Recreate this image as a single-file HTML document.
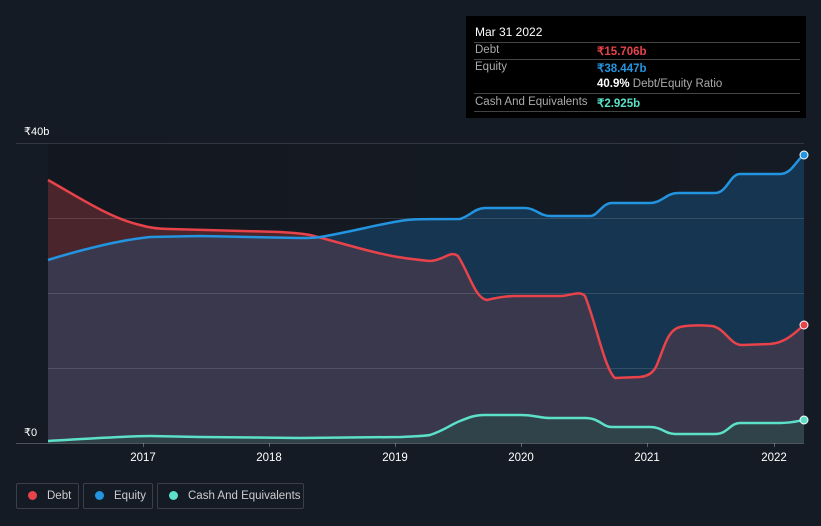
<!DOCTYPE html>
<html><head><style>
html,body{margin:0;width:821px;height:526px;overflow:hidden}
body{background:#151b24;font-family:"Liberation Sans",sans-serif;position:relative}
.tt{position:absolute;left:466px;top:16px;width:340px;height:102px;background:#000;color:#fff;font-size:11.5px}
.tt div{white-space:nowrap}
.r{position:absolute;left:8px;right:6px;border-top:1px solid #444}
.lg{position:absolute;top:483px;height:26px;border:1px solid #3a3f48;border-radius:2px;color:#ccc;font-size:11.5px;line-height:24px;box-sizing:border-box;white-space:nowrap}
.dot{display:inline-block;width:9px;height:9px;border-radius:50%;margin:0 10px 0 11px;vertical-align:-1px}
</style></head><body>
<svg width="821" height="526" style="position:absolute;left:0;top:0">
<defs>
<clipPath id="eq"><path d="M48,260 C80,250 120,240 150,237 L200,236 L300,238 C310,238 315,238 320,237 C350,232 380,224 400,221 C410,219 420,219 460,219 C470,216 475,208 485,208 L525,208 C535,208 540,216 550,216 L590,216 C598,216 602,203 612,203 L650,203 C662,203 666,193 678,193 L715,193 C727,193 730,174 740,174 L780,174 C792,174 796,160 804,155 L804,443 L48,443Z"/></clipPath>
<linearGradient id="bg" x1="0" x2="1"><stop offset="0" stop-color="#131820"/><stop offset="1" stop-color="#151b24"/></linearGradient>
</defs>
<rect x="48" y="143" width="756" height="300" fill="url(#bg)"/>
<path d="M48,260 C80,250 120,240 150,237 L200,236 L300,238 C310,238 315,238 320,237 C350,232 380,224 400,221 C410,219 420,219 460,219 C470,216 475,208 485,208 L525,208 C535,208 540,216 550,216 L590,216 C598,216 602,203 612,203 L650,203 C662,203 666,193 678,193 L715,193 C727,193 730,174 740,174 L780,174 C792,174 796,160 804,155 L804,443 L48,443Z" fill="#163550"/>
<path d="M48,180 C80,198 110,218 140,225 C150,228 160,229 170,229 L280,232 C295,233 300,233 310,235 C330,240 350,246 370,251 C390,256 400,258 430,261 C445,260 450,250 458,256 C470,275 475,298 487,300 C495,298 505,296 515,296 L560,296 C570,296 580,290 585,296 C595,320 605,370 615,378 L640,377 C650,376 655,371 658,362 C665,345 668,330 680,327 C690,325 700,325 712,326 C725,328 730,345 742,345 L770,344 C785,343 795,333 804,325 L804,443 L48,443Z" fill="#4a252c"/>
<g clip-path="url(#eq)"><path d="M48,180 C80,198 110,218 140,225 C150,228 160,229 170,229 L280,232 C295,233 300,233 310,235 C330,240 350,246 370,251 C390,256 400,258 430,261 C445,260 450,250 458,256 C470,275 475,298 487,300 C495,298 505,296 515,296 L560,296 C570,296 580,290 585,296 C595,320 605,370 615,378 L640,377 C650,376 655,371 658,362 C665,345 668,330 680,327 C690,325 700,325 712,326 C725,328 730,345 742,345 L770,344 C785,343 795,333 804,325 L804,443 L48,443Z" fill="#3a384c"/></g>
<g stroke="#fff" stroke-opacity="0.13" stroke-width="1"><line x1="16" y1="143.5" x2="804" y2="143.5"/><line x1="48" y1="218.5" x2="804" y2="218.5"/><line x1="48" y1="293.5" x2="804" y2="293.5"/><line x1="48" y1="368.5" x2="804" y2="368.5"/></g>
<path d="M48,441 C100,438 130,436 150,436 L200,437 L300,438 L400,437 C420,436 425,436 430,435 C445,430 450,425 460,421 C470,417 475,415 485,415 L520,415 C535,415 540,418 550,418 L585,418 C600,418 602,427 612,427 L650,427 C662,427 665,434 675,434 L715,434 C728,434 730,423 740,423 L780,423 C792,423 798,421 804,420 L804,443 L48,443Z" fill="#2a4a4a" fill-opacity="0.6"/>
<path d="M48,180 C80,198 110,218 140,225 C150,228 160,229 170,229 L280,232 C295,233 300,233 310,235 C330,240 350,246 370,251 C390,256 400,258 430,261 C445,260 450,250 458,256 C470,275 475,298 487,300 C495,298 505,296 515,296 L560,296 C570,296 580,290 585,296 C595,320 605,370 615,378 L640,377 C650,376 655,371 658,362 C665,345 668,330 680,327 C690,325 700,325 712,326 C725,328 730,345 742,345 L770,344 C785,343 795,333 804,325" fill="none" stroke="#e8434a" stroke-width="2.5"/>
<path d="M48,260 C80,250 120,240 150,237 L200,236 L300,238 C310,238 315,238 320,237 C350,232 380,224 400,221 C410,219 420,219 460,219 C470,216 475,208 485,208 L525,208 C535,208 540,216 550,216 L590,216 C598,216 602,203 612,203 L650,203 C662,203 666,193 678,193 L715,193 C727,193 730,174 740,174 L780,174 C792,174 796,160 804,155" fill="none" stroke="#2394e0" stroke-width="2.5"/>
<path d="M48,441 C100,438 130,436 150,436 L200,437 L300,438 L400,437 C420,436 425,436 430,435 C445,430 450,425 460,421 C470,417 475,415 485,415 L520,415 C535,415 540,418 550,418 L585,418 C600,418 602,427 612,427 L650,427 C662,427 665,434 675,434 L715,434 C728,434 730,423 740,423 L780,423 C792,423 798,421 804,420" fill="none" stroke="#5ce0c8" stroke-width="2.5"/>
<circle cx="804" cy="155" r="4" fill="#2394e0" stroke="#fff" stroke-width="1"/>
<circle cx="804" cy="325" r="4" fill="#e8434a" stroke="#fff" stroke-width="1"/>
<circle cx="804" cy="420" r="4" fill="#5ce0c8" stroke="#fff" stroke-width="1"/>
<line x1="16" y1="443.5" x2="804" y2="443.5" stroke="#fff" stroke-opacity="0.25"/>
<g stroke="#fff" stroke-opacity="0.3"><line x1="143.5" y1="443" x2="143.5" y2="447"/><line x1="269.5" y1="443" x2="269.5" y2="447"/><line x1="395.5" y1="443" x2="395.5" y2="447"/><line x1="521.5" y1="443" x2="521.5" y2="447"/><line x1="647.5" y1="443" x2="647.5" y2="447"/><line x1="774.5" y1="443" x2="774.5" y2="447"/></g>
<g fill="#fff" font-size="11.5" font-family="Liberation Sans,sans-serif" text-anchor="middle"><text x="143" y="461">2017</text><text x="269" y="461">2018</text><text x="395" y="461">2019</text><text x="521" y="461">2020</text><text x="647" y="461">2021</text><text x="774" y="461">2022</text></g>
<text x="24" y="135" fill="#fff" font-size="11" font-family="Liberation Sans,sans-serif">₹40b</text>
<text x="24" y="436" fill="#fff" font-size="11" font-family="Liberation Sans,sans-serif">₹0</text>
</svg>
<div class="tt">
<div style="position:absolute;left:9px;top:9px;font-size:12px">Mar 31 2022</div>
<div class="r" style="top:26px"></div>
<div style="position:absolute;left:9px;top:28px;color:#aaa">Debt</div><div style="position:absolute;left:131px;top:28px;color:#e8434a;font-weight:bold">₹15.706b</div>
<div class="r" style="top:43px"></div>
<div style="position:absolute;left:9px;top:45px;color:#aaa">Equity</div><div style="position:absolute;left:131px;top:45px;color:#2394e0;font-weight:bold">₹38.447b</div>
<div style="position:absolute;left:131px;top:62px;color:#aaa"><b style="color:#fff">40.9%</b> Debt/Equity Ratio</div>
<div class="r" style="top:77px"></div>
<div style="position:absolute;left:9px;top:80px;color:#aaa">Cash And Equivalents</div><div style="position:absolute;left:131px;top:80px;color:#5ce0c8;font-weight:bold">₹2.925b</div>
<div class="r" style="top:95px"></div>
</div>
<div class="lg" style="left:16px;width:63px"><span class="dot" style="background:#e8434a"></span>Debt</div>
<div class="lg" style="left:83px;width:70px"><span class="dot" style="background:#2394e0"></span>Equity</div>
<div class="lg" style="left:157px;width:147px"><span class="dot" style="background:#5ce0c8"></span>Cash And Equivalents</div>
</body></html>
